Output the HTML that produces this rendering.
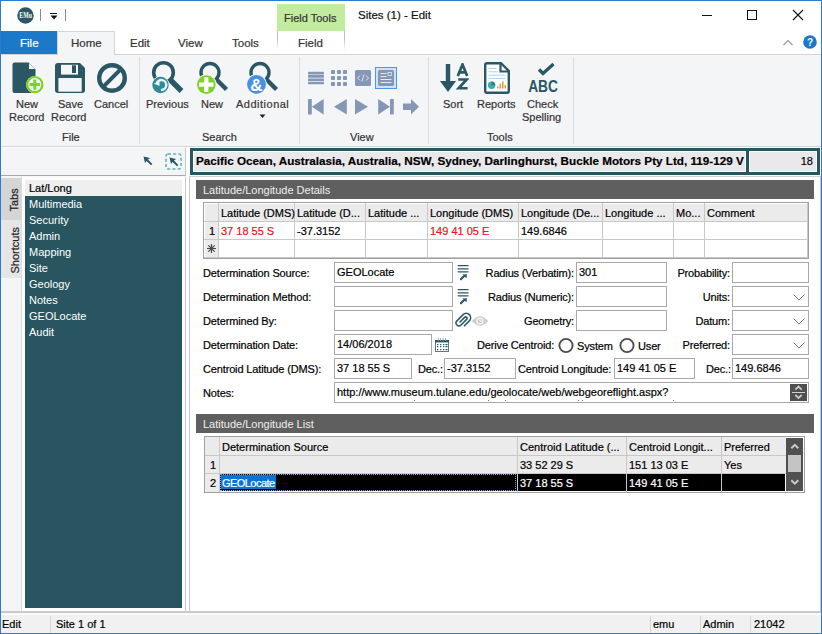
<!DOCTYPE html>
<html><head><meta charset="utf-8">
<style>
*{box-sizing:border-box;margin:0;padding:0}
html,body{width:822px;height:634px;overflow:hidden;background:#fff}
body{font-family:"Liberation Sans",sans-serif;font-size:11px;color:#222;position:relative}
.a{position:absolute}
.t{position:absolute;white-space:nowrap;line-height:13px;-webkit-text-stroke:0.2px currentColor}
.rb{color:#333}
.inp{position:absolute;border:1px solid #a9a9a9;background:#fff;height:21px}
.inp span{-webkit-text-stroke:0.2px #000;color:#000;position:absolute;left:2px;top:3px;white-space:nowrap}
.lbl{position:absolute;white-space:nowrap;color:#000;letter-spacing:-0.15px}
.hdr{-webkit-text-stroke:0;position:absolute;background:#5e5f5e;color:#f0f0f0;height:19px;padding-left:7px;line-height:21px}
.sel{position:absolute;border:1px solid #a9a9a9;background:#fff;height:21px}
.sel svg{position:absolute;right:3px;top:7px}
.vsep{position:absolute;width:1px;background:#dcdcdc}
</style></head>
<body>
<!-- window border -->
<div class="a" style="left:0;top:0;width:822px;height:634px;border:1px solid #2b7bd4;z-index:50;pointer-events:none"></div>

<!-- title bar -->
<svg class="a" style="left:17px;top:7px" width="17" height="17" viewBox="0 0 17 17"><circle cx="8.5" cy="8.5" r="8.2" fill="#2a5763"/><text x="2.3" y="11.3" font-family="Liberation Serif" font-size="7.5" font-weight="bold" fill="#fff" textLength="12.6" lengthAdjust="spacingAndGlyphs">EMu</text></svg>
<div class="a" style="left:40px;top:9px;width:1px;height:12px;background:#8a8a8a"></div>
<div class="a" style="left:50px;top:13px;width:7px;height:1px;background:#111"></div>
<svg class="a" style="left:50px;top:15px" width="8" height="5"><path d="M0.5 0.5H7.5L4 4.5Z" fill="#111"/></svg>
<div class="a" style="left:65px;top:9px;width:1px;height:12px;background:#8a8a8a"></div>

<div class="a" style="left:277px;top:4px;width:68px;height:27px;background:#c1eb9e"></div>
<div class="t" style="left:284px;top:12px;color:#333">Field Tools</div>
<div class="t" style="left:358px;top:9px;color:#111;font-size:11.5px">Sites (1) - Edit</div>

<div class="a" style="left:702px;top:15px;width:10px;height:1px;background:#111"></div>
<div class="a" style="left:747px;top:10px;width:10px;height:10px;border:1px solid #111"></div>
<svg class="a" style="left:792px;top:9px" width="12" height="12"><path d="M1 1L11 11M11 1L1 11" stroke="#111" stroke-width="1.1"/></svg>

<!-- tab row -->
<div class="a" style="left:1px;top:31px;width:56px;height:23px;background:#1c79c9"></div>
<div class="t" style="left:20px;top:37px;color:#fff;font-size:11.5px">File</div>
<div class="a" style="left:57px;top:31px;width:58px;height:24px;background:#f4f5f7;border:1px solid #d4d4d4;border-bottom:none;z-index:2"></div>
<div class="t rb" style="left:71px;top:37px;z-index:3;font-size:11.5px">Home</div>
<div class="t rb" style="left:130px;top:37px;font-size:11.5px">Edit</div>
<div class="t rb" style="left:178px;top:37px;font-size:11.5px">View</div>
<div class="t rb" style="left:232px;top:37px;font-size:11.5px">Tools</div>
<div class="a" style="left:277px;top:31px;width:1px;height:19px;background:linear-gradient(#bdbdbd,#bdbdbd 40%,rgba(255,255,255,0))"></div><div class="a" style="left:344px;top:31px;width:1px;height:19px;background:linear-gradient(#bdbdbd,#bdbdbd 40%,rgba(255,255,255,0))"></div>
<div class="t rb" style="left:298px;top:37px;font-size:11.5px">Field</div>
<svg class="a" style="left:783px;top:39px" width="10" height="7"><path d="M0.5 6L5 1.5L9.5 6" stroke="#999" fill="none" stroke-width="1.2"/></svg>
<svg class="a" style="left:803px;top:35px" width="14" height="14"><circle cx="7" cy="7" r="6.8" fill="#1c79c9"/><text x="7" y="11" font-size="10" font-weight="bold" fill="#fff" text-anchor="middle">?</text></svg>

<!-- ribbon -->
<div class="a" style="left:1px;top:54px;width:820px;height:93px;background:#f4f5f7;border-top:1px solid #d4d4d4;border-bottom:1px solid #d4d4d4"></div>

<!-- File group -->
<svg class="a" style="left:12px;top:62px" width="34" height="33" viewBox="0 0 34 33">
 <path d="M2.5 0.5H16.5L23.5 7.5V30.5Q23.5 31 23 31H2.5Q0.5 31 0.5 29V2.5Q0.5 0.5 2.5 0.5Z" fill="#2a5763"/>
 <path d="M17 1.2V7H22.8Z" fill="#f4f5f7"/>
 <circle cx="22.8" cy="22.6" r="8.7" fill="#f4f5f7"/>
 <circle cx="22.8" cy="22.6" r="7.6" fill="none" stroke="#7ed321" stroke-width="2.2"/>
 <path d="M22.8 17.4V27.8M17.6 22.6H28" stroke="#7ed321" stroke-width="3"/>
</svg>
<div class="t rb" style="left:16px;top:98px">New</div>
<div class="t rb" style="left:9px;top:111px">Record</div>

<svg class="a" style="left:55px;top:63px" width="30" height="30" viewBox="0 0 30 30">
 <path d="M3 0H25L30 5V27Q30 30 27 30H3Q0 30 0 27V3Q0 0 3 0Z" fill="#2a5763"/>
 <rect x="6" y="1.8" width="17" height="9.8" fill="#f4f5f7"/>
 <rect x="17" y="2.3" width="4" height="7.7" fill="#2a5763"/>
 <rect x="3.4" y="15" width="23.3" height="13.7" fill="#f4f5f7"/>
</svg>
<div class="t rb" style="left:58px;top:98px">Save</div>
<div class="t rb" style="left:51px;top:111px">Record</div>

<svg class="a" style="left:97px;top:63px" width="30" height="30" viewBox="0 0 30 30">
 <circle cx="15" cy="15" r="12.8" fill="none" stroke="#2a5763" stroke-width="4.4"/>
 <path d="M23.8 6.2L6.2 23.8" stroke="#2a5763" stroke-width="4"/>
</svg>
<div class="t rb" style="left:94px;top:98px">Cancel</div>
<div class="t rb" style="left:62px;top:131px">File</div>
<div class="vsep" style="left:139px;top:57px;height:87px"></div>

<!-- Search group -->
<svg class="a" style="left:150px;top:60px" width="36" height="36" viewBox="0 0 36 36">
 <circle cx="13.5" cy="12.5" r="9.8" fill="none" stroke="#2a5763" stroke-width="3.6"/>
 <path d="M20.5 20L31.5 31" stroke="#2a5763" stroke-width="5.4"/>
 <circle cx="10.5" cy="25" r="9" fill="#f4f5f7"/>
 <circle cx="10.5" cy="25" r="8.2" fill="#2e8a98"/>
 <path d="M6.5 23.5 A5 5 0 1 1 11 30" fill="none" stroke="#e8f3f5" stroke-width="2.4"/>
 <path d="M4 23.8L9.5 20.5L9.5 26Z" fill="#e8f3f5"/>
</svg>
<div class="t rb" style="left:146px;top:98px">Previous</div>

<svg class="a" style="left:196px;top:60px" width="34" height="36" viewBox="0 0 34 36">
 <circle cx="14" cy="12.5" r="9" fill="none" stroke="#2a5763" stroke-width="3.4"/>
 <path d="M20.5 19.5L30.5 29.5" stroke="#2a5763" stroke-width="4.4"/>
 <circle cx="10.3" cy="24.6" r="10.3" fill="#f4f5f7"/>
 <circle cx="10.3" cy="24.6" r="9.3" fill="#7ed321"/>
 <path d="M10.3 17.3V31.9M3 24.6H17.6" stroke="#fff" stroke-width="4.2"/>
</svg>
<div class="t rb" style="left:201px;top:98px">New</div>

<svg class="a" style="left:246px;top:60px" width="34" height="36" viewBox="0 0 34 36">
 <circle cx="14" cy="12.5" r="9" fill="none" stroke="#2a5763" stroke-width="3.4"/>
 <path d="M20.5 19.5L30.5 29.5" stroke="#2a5763" stroke-width="4.4"/>
 <circle cx="10.5" cy="24.3" r="10.4" fill="#f4f5f7"/>
 <circle cx="10.5" cy="24.3" r="9.4" fill="#4a90e2"/>
 <text x="10.3" y="30.5" font-family="Liberation Sans" font-size="17" font-weight="bold" fill="#fff" text-anchor="middle">&amp;</text>
</svg>
<div class="t rb" style="left:236px;top:98px;letter-spacing:0.5px">Additional</div>
<svg class="a" style="left:259px;top:114px" width="7" height="5"><path d="M0.5 0.5H6.5L3.5 4Z" fill="#222"/></svg>
<div class="t rb" style="left:202px;top:131px">Search</div>
<div class="vsep" style="left:299px;top:57px;height:87px"></div>

<!-- View group -->
<svg class="a" style="left:308px;top:71px" width="16" height="14" viewBox="0 0 16 14">
 <rect x="0" y="0.8" width="16" height="2.6" rx="0.6" fill="#8497b5"/><rect x="0" y="4.1" width="16" height="2.6" rx="0.6" fill="#8497b5"/>
 <rect x="0" y="7.4" width="16" height="2.6" rx="0.6" fill="#8497b5"/><rect x="0" y="10.7" width="16" height="2.6" rx="0.6" fill="#8497b5"/>
</svg>
<svg class="a" style="left:331px;top:70px" width="16" height="16" viewBox="0 0 16 16" fill="#8497b5">
 <rect x="0" y="0" width="4" height="4" rx="0.8"/><rect x="6" y="0" width="4" height="4" rx="0.8"/><rect x="12" y="0" width="4" height="4" rx="0.8"/>
 <rect x="0" y="6" width="4" height="4" rx="0.8"/><rect x="6" y="6" width="4" height="4" rx="0.8"/><rect x="12" y="6" width="4" height="4" rx="0.8"/>
 <rect x="0" y="12" width="4" height="4" rx="0.8"/><rect x="6" y="12" width="4" height="4" rx="0.8"/><rect x="12" y="12" width="4" height="4" rx="0.8"/>
</svg>
<svg class="a" style="left:355px;top:70px" width="16" height="16" viewBox="0 0 16 16">
 <rect x="0" y="0" width="16" height="16" rx="1.5" fill="#8497b5"/>
 <path d="M5 5.5L2.5 8L5 10.5M11 5.5L13.5 8L11 10.5M9 4.5L7 11.5" stroke="#e6eaf1" stroke-width="0.9" fill="none"/>
</svg>
<div class="a" style="left:375px;top:67px;width:22px;height:22px;background:#cde3f7;border:1px solid #4b98e3"></div>
<svg class="a" style="left:378px;top:70px" width="16" height="16" viewBox="0 0 16 16">
 <rect x="0" y="0" width="16" height="16" rx="1.5" fill="#8497b5"/>
 <rect x="2.5" y="3" width="6" height="1" fill="#e6eaf1"/><rect x="10" y="2.5" width="3.5" height="3" fill="none" stroke="#e6eaf1" stroke-width="0.8"/>
 <rect x="2.5" y="6" width="6" height="1" fill="#e6eaf1"/><rect x="2.5" y="9" width="11" height="1" fill="#e6eaf1"/><rect x="2.5" y="12" width="11" height="1" fill="#e6eaf1"/>
</svg>
<svg class="a" style="left:308px;top:99px" width="112" height="16" viewBox="0 0 112 16" fill="#8497b5">
 <rect x="0" y="0" width="3.8" height="15.5" rx="0.5"/><path d="M3.8 7.7L15.6 0V15.5Z"/>
 <path d="M26 7.7L38.8 0V15.5Z"/>
 <path d="M47 0L60 7.7L47 15.5Z"/>
 <path d="M70.2 0L82 7.7L70.2 15.5Z"/><rect x="82" y="0" width="3.8" height="15.5" rx="0.5"/>
 <path d="M95 4.5H103V0L111 7.7L103 15.5V11H95Z"/>
</svg>
<div class="t rb" style="left:350px;top:131px">View</div>
<div class="vsep" style="left:428px;top:57px;height:87px"></div>

<!-- Tools group -->
<svg class="a" style="left:440px;top:63px" width="29" height="30" viewBox="0 0 29 30">
 <rect x="5.8" y="1" width="4.4" height="19" fill="#2a5763"/>
 <path d="M0 18H16L8 29Z" fill="#2a5763"/>
 <path d="M17.8 13L22.5 1.5L27.2 13M19.4 9.4H25.6" stroke="#2a5763" stroke-width="2.7" fill="none" stroke-linejoin="miter"/>
 <path d="M18.3 16.5H26.7L18.6 25.3H27.6" stroke="#2a5763" stroke-width="2.6" fill="none" stroke-linejoin="miter"/>
</svg>
<div class="t rb" style="left:443px;top:98px">Sort</div>

<svg class="a" style="left:484px;top:62px" width="26" height="32" viewBox="0 0 26 32">
 <path d="M3 1.2H17L24.8 9V29Q24.8 30.8 23 30.8H3Q1.2 30.8 1.2 29V3Q1.2 1.2 3 1.2Z" fill="#fff" stroke="#2a5763" stroke-width="2.4"/>
 <path d="M16.5 1.5V9.5H24.5" fill="none" stroke="#2a5763" stroke-width="2.2"/>
 <path d="M4.5 6.5H12.5M4.5 9.8H13.5M4.5 13.2H21.5M4.5 16.5H21.5" stroke="#b3d4f0" stroke-width="1.1"/>
 <circle cx="7.6" cy="23.2" r="3.7" fill="#3aafa9"/><path d="M7.6 23.2V19.5A3.7 3.7 0 0 1 11.3 23.2Z" fill="#2a5763" opacity="0.55"/>
 <path d="M13.8 26.5V24.5M16.3 26.5V21.8M18.8 26.5V19.5M21.3 26.5V23" stroke="#e39b2e" stroke-width="1.5"/>
</svg>
<div class="t rb" style="left:477px;top:98px">Reports</div>

<svg class="a" style="left:526px;top:62px" width="34" height="31" viewBox="0 0 34 31">
 <path d="M13 7.5L17 11.5L27.5 2" fill="none" stroke="#2a5763" stroke-width="3.3"/>
 <text x="2.2" y="29.8" font-family="Liberation Sans" font-size="15.6" font-weight="bold" fill="#2a5763" textLength="29.8" lengthAdjust="spacingAndGlyphs">ABC</text>
</svg>
<div class="t rb" style="left:527px;top:98px">Check</div>
<div class="t rb" style="left:522px;top:111px">Spelling</div>
<div class="t rb" style="left:487px;top:131px">Tools</div>
<div class="vsep" style="left:573px;top:57px;height:87px"></div>


<!-- lower panels -->
<div class="a" style="left:1px;top:147px;width:820px;height:466px;background:#f4f5f7"></div>
<!-- left toolbar -->
<div class="a" style="left:1px;top:147px;width:185px;height:29px;border-right:1px solid #c8c8c8;border-bottom:1px solid #a9a9a9;border-top:1px solid #fff"></div>
<svg class="a" style="left:143px;top:156px" width="10" height="10" viewBox="0 0 10 10"><path d="M0.5 0.5L7 2L5 3.6L9.3 8L8 9.3L3.6 5L2 7Z" fill="#2a5763"/></svg>
<svg class="a" style="left:165px;top:153px" width="17" height="17" viewBox="0 0 17 17">
 <rect x="1" y="1" width="15" height="15" rx="2" fill="none" stroke="#5fb2b8" stroke-width="1.6" stroke-dasharray="3 2.2"/>
 <path d="M4.5 4.5L11 6L9 7.6L13.3 12L12 13.3L7.6 9L6 11Z" fill="#2a5763"/>
</svg>
<!-- sidebar tabs -->
<div class="a" style="left:1px;top:178px;width:20px;height:42px;background:#d5d5d5"></div>
<div class="a" style="left:1px;top:220px;width:20px;height:58px;background:#e6e6e6"></div>
<div class="a" style="left:21px;top:177px;width:1px;height:435px;background:#dcdcdc"></div>
<div class="t" style="left:3px;top:194px;width:22px;transform:rotate(-90deg);transform-origin:50% 50%;text-align:center;color:#222">Tabs</div>
<div class="t" style="left:-8px;top:244px;width:46px;transform:rotate(-90deg);transform-origin:50% 50%;text-align:center;color:#222">Shortcuts</div>
<!-- list -->
<div class="a" style="left:22px;top:177px;width:164px;height:435px;background:#fff;border-right:1px solid #c8c8c8"></div>
<div class="a" style="left:25px;top:180px;width:157px;height:16px;background:#efefef"></div>
<div class="a" style="left:25px;top:196px;width:157px;height:412px;background:#285560"></div>
<div class="t" style="left:29px;top:182px;color:#000">Lat/Long</div>
<div class="t" style="left:29px;top:196px;color:#fff;line-height:16px;-webkit-text-stroke:0">Multimedia<br>Security<br>Admin<br>Mapping<br>Site<br>Geology<br>Notes<br>GEOLocate<br>Audit</div>

<div class="a" style="left:186px;top:147px;width:3px;height:465px;background:#fff"></div>
<!-- right panel -->
<div class="a" style="left:189px;top:147px;width:632px;height:29px;background:#fff"></div><div class="a" style="left:189px;top:176px;width:632px;height:436px;background:#fff;border-left:1px solid #c8c8c8;border-right:1px solid #c8c8c8;border-top:1px solid #d0d0d0"></div>

<div class="a" style="left:190px;top:148px;width:630px;height:27px;background:#285560"></div>
<div class="a" style="left:193px;top:151px;width:553px;height:21px;background:#e9e9ec;border:1px solid #fff;overflow:hidden">
 <div class="t" style="left:2px;top:2px;font-weight:bold;color:#000;font-size:11.7px">Pacific Ocean, Australasia, Australia, NSW, Sydney, Darlinghurst, Buckle Motors Pty Ltd, 119-129 V</div>
</div>
<div class="a" style="left:749px;top:151px;width:68px;height:21px;background:#e9e9ec;border:1px solid #fff">
 <div class="t" style="right:3px;top:3px;color:#000">18</div>
</div>

<!-- details header -->
<div class="hdr" style="left:196px;top:180px;width:618px">Latitude/Longitude Details</div>
<div class="a" style="left:203px;top:202px;width:606px;height:57px;border:1px solid #a0a0a0;background:#fff"></div>
<div class="a" style="left:205px;top:204px;width:602px;height:17px;background:#ebebec"></div>
<div class="a" style="left:205px;top:204px;width:13px;height:53px;background:#ebebec"></div>
<div class="a" style="left:204px;top:221px;width:604px;height:1px;background:#c8c8c8"></div>
<div class="a" style="left:204px;top:239px;width:604px;height:1px;background:#c8c8c8"></div>
<div class="a" style="left:204px;top:257px;width:604px;height:1px;background:#c8c8c8"></div>
<div class="a" style="left:218px;top:203px;width:1px;height:55px;background:#c8c8c8"></div>
<div class="a" style="left:294px;top:203px;width:1px;height:55px;background:#c8c8c8"></div>
<div class="a" style="left:365px;top:203px;width:1px;height:55px;background:#c8c8c8"></div>
<div class="a" style="left:427px;top:203px;width:1px;height:55px;background:#c8c8c8"></div>
<div class="a" style="left:518px;top:203px;width:1px;height:55px;background:#c8c8c8"></div>
<div class="a" style="left:602px;top:203px;width:1px;height:55px;background:#c8c8c8"></div>
<div class="a" style="left:673px;top:203px;width:1px;height:55px;background:#c8c8c8"></div>
<div class="a" style="left:704px;top:203px;width:1px;height:55px;background:#c8c8c8"></div>
<div class="a" style="left:807px;top:203px;width:1px;height:55px;background:#c8c8c8"></div>
<div class="t" style="left:221px;top:207px;color:#000">Latitude (DMS)</div>
<div class="t" style="left:297px;top:207px;color:#000">Latitude (D...</div>
<div class="t" style="left:368px;top:207px;color:#000">Latitude ...</div>
<div class="t" style="left:430px;top:207px;color:#000">Longitude (DMS)</div>
<div class="t" style="left:521px;top:207px;color:#000">Longitude (De...</div>
<div class="t" style="left:605px;top:207px;color:#000">Longitude ...</div>
<div class="t" style="left:676px;top:207px;color:#000">Mo...</div>
<div class="t" style="left:707px;top:207px;color:#000">Comment</div>
<div class="t" style="left:209px;top:225px;color:#000">1</div>
<svg class="a" style="left:207px;top:244px" width="9" height="9" viewBox="0 0 9 9"><path d="M4.5 0V9M0 4.5H9M1.3 1.3L7.7 7.7M7.7 1.3L1.3 7.7" stroke="#4a4a4a" stroke-width="1.2"/></svg>
<div class="t" style="left:221px;top:225px;color:#e8141b">37 18 55 S</div>
<div class="t" style="left:297px;top:225px;color:#000">-37.3152</div>
<div class="t" style="left:430px;top:225px;color:#e8141b">149 41 05 E</div>
<div class="t" style="left:521px;top:225px;color:#000">149.6846</div>
<div class="lbl t" style="left:203px;top:267px">Determination Source:</div>
<div class="lbl t" style="left:203px;top:291px">Determination Method:</div>
<div class="lbl t" style="left:203px;top:315px">Determined By:</div>
<div class="lbl t" style="left:203px;top:339px">Determination Date:</div>
<div class="lbl t" style="left:203px;top:363px">Centroid Latitude (DMS):</div>
<div class="lbl t" style="left:203px;top:387px">Notes:</div>
<div class="inp" style="left:334px;top:262px;width:119px;height:21px"><span>GEOLocate</span></div>
<div class="inp" style="left:334px;top:286px;width:119px;height:21px"><span></span></div>
<div class="inp" style="left:334px;top:310px;width:119px;height:21px"><span></span></div>
<div class="inp" style="left:334px;top:334px;width:98px;height:21px"><span>14/06/2018</span></div>
<div class="inp" style="left:334px;top:358px;width:78px;height:21px"><span>37 18 55 S</span></div>
<div class="inp" style="left:334px;top:382px;width:475px;height:21px"><span>http://www.museum.tulane.edu/geolocate/web/webgeoreflight.aspx?</span></div>
<div class="lbl t" style="left:374px;width:200px;text-align:right;top:267px">Radius (Verbatim):</div>
<div class="lbl t" style="left:374px;width:200px;text-align:right;top:291px">Radius (Numeric):</div>
<div class="lbl t" style="left:374px;width:200px;text-align:right;top:315px">Geometry:</div>
<div class="inp" style="left:576px;top:262px;width:91px;height:21px"><span>301</span></div>
<div class="inp" style="left:576px;top:286px;width:91px;height:21px"><span></span></div>
<div class="inp" style="left:576px;top:310px;width:91px;height:21px"><span></span></div>
<div class="lbl t" style="left:530px;width:200px;text-align:right;top:267px">Probability:</div>
<div class="lbl t" style="left:530px;width:200px;text-align:right;top:291px">Units:</div>
<div class="lbl t" style="left:530px;width:200px;text-align:right;top:315px">Datum:</div>
<div class="lbl t" style="left:530px;width:200px;text-align:right;top:339px">Preferred:</div>
<div class="inp" style="left:732px;top:262px;width:77px;height:21px"><span></span></div>
<div class="sel" style="left:732px;top:286px;width:77px"><svg width="12" height="7"><path d="M0.5 0.5L6 6L11.5 0.5" stroke="#777" fill="none" stroke-width="1"/></svg></div>
<div class="sel" style="left:732px;top:310px;width:77px"><svg width="12" height="7"><path d="M0.5 0.5L6 6L11.5 0.5" stroke="#777" fill="none" stroke-width="1"/></svg></div>
<div class="sel" style="left:732px;top:334px;width:77px"><svg width="12" height="7"><path d="M0.5 0.5L6 6L11.5 0.5" stroke="#777" fill="none" stroke-width="1"/></svg></div>
<div class="lbl t" style="left:477px;top:339px">Derive Centroid:</div>
<svg class="a" style="left:558px;top:337px" width="17" height="17"><circle cx="8" cy="8.5" r="6.6" fill="#fff" stroke="#4d4d4d" stroke-width="1.9"/></svg>
<div class="lbl t" style="left:577px;top:340px">System</div>
<svg class="a" style="left:619px;top:337px" width="17" height="17"><circle cx="8" cy="8.5" r="6.6" fill="#fff" stroke="#4d4d4d" stroke-width="1.9"/></svg>
<div class="lbl t" style="left:638px;top:340px">User</div>
<div class="lbl t" style="left:418px;top:363px">Dec.:</div>
<div class="inp" style="left:444px;top:358px;width:72px;height:21px"><span>-37.3152</span></div>
<div class="lbl t" style="left:518px;top:363px">Centroid Longitude:</div>
<div class="inp" style="left:614px;top:358px;width:81px;height:21px"><span>149 41 05 E</span></div>
<div class="lbl t" style="left:706px;top:363px">Dec.:</div>
<div class="inp" style="left:732px;top:358px;width:77px;height:21px"><span>149.6846</span></div>
<svg class="a" style="left:457px;top:264px" width="13" height="17" viewBox="0 0 13 17"><path d="M0.7 1.7H11.5M0.7 4.9H11.5M0.7 7.9H11.5" stroke="#2a5763" stroke-width="1.3"/><path d="M3.9 15.2L6.8 12.3" stroke="#2a5763" stroke-width="2.2" stroke-linecap="round"/><path d="M9.9 10.2L5.4 10.6L9.5 14.6Z" fill="#2a5763"/></svg>
<svg class="a" style="left:457px;top:288px" width="13" height="17" viewBox="0 0 13 17"><path d="M0.7 1.7H11.5M0.7 4.9H11.5M0.7 7.9H11.5" stroke="#2a5763" stroke-width="1.3"/><path d="M3.9 15.2L6.8 12.3" stroke="#2a5763" stroke-width="2.2" stroke-linecap="round"/><path d="M9.9 10.2L5.4 10.6L9.5 14.6Z" fill="#2a5763"/></svg>
<svg class="a" style="left:454px;top:312px" width="18" height="18" viewBox="0 0 18 18"><g transform="rotate(45 9 9)"><path d="M7.6 12.5V5.3A1.4 1.4 0 0 1 10.4 5.3V13.2A2.9 2.9 0 0 1 4.6 13.2V4.4A4.4 4.4 0 0 1 13.4 4.4V12" fill="none" stroke="#2a5763" stroke-width="1.5"/></g></svg>
<svg class="a" style="left:471px;top:315px" width="18" height="12" viewBox="0 0 18 12"><path d="M0.8 6Q9 -3.5 17.2 6Q9 15.5 0.8 6Z" fill="#cdcdcd"/><circle cx="9" cy="6" r="3.6" fill="#fff"/><circle cx="9" cy="6" r="2.5" fill="#cdcdcd"/><path d="M9 4V6.2H11" stroke="#fff" stroke-width="0.8" fill="none"/></svg>
<svg class="a" style="left:435px;top:338px" width="14" height="14" viewBox="0 0 14 14"><rect x="0.5" y="2.5" width="13" height="11" fill="#fff" stroke="#5a7d85" stroke-width="1"/><rect x="0" y="2" width="14" height="2.4" fill="#2a5763"/><path d="M3.3 0V3M5.4 0V3M8 0V3M10.5 0V3" stroke="#8fa9ae" stroke-width="0.9"/><g fill="#2a5763"><rect x="2" y="6" width="1.3" height="1.2"/><rect x="5" y="6" width="1.3" height="1.2"/><rect x="8" y="6" width="1.3" height="1.2"/><rect x="10.5" y="6" width="2" height="1.2"/><rect x="2" y="8" width="1.3" height="1.2"/><rect x="5" y="8" width="1.3" height="1.2"/><rect x="8" y="8" width="1.3" height="1.2"/><rect x="10.5" y="8" width="2" height="1.2"/><rect x="2" y="11" width="1.3" height="1.2"/><rect x="5" y="11" width="1.3" height="1.2"/><rect x="8" y="11" width="1.3" height="1.2"/><rect x="10.5" y="11" width="2" height="1.2"/></g></svg>
<div class="a" style="left:790px;top:384px;width:17px;height:17px;background:#4f4f4f"><svg width="17" height="17"><path d="M5.3 5.6L8.5 2.6L11.7 5.6M5.3 11L8.5 14L11.7 11" stroke="#c9c9c9" fill="none" stroke-width="1.8"/><path d="M2 8.5H15" stroke="#cfcfcf" stroke-width="1"/></svg></div>
<div class="a" style="left:414px;top:400px;width:1px;height:1px;background:#777"></div><div class="a" style="left:488px;top:400px;width:1px;height:1px;background:#777"></div><div class="a" style="left:505px;top:400px;width:1px;height:1px;background:#777"></div><div class="a" style="left:578px;top:400px;width:1px;height:1px;background:#777"></div><div class="a" style="left:582px;top:400px;width:1px;height:1px;background:#777"></div><div class="a" style="left:673px;top:400px;width:1px;height:1px;background:#777"></div>
<div class="hdr" style="left:196px;top:414px;width:618px">Latitude/Longitude List</div>
<div class="a" style="left:204px;top:436px;width:601px;height:57px;border:1px solid #a0a0a0;background:#fff"></div>
<div class="a" style="left:205px;top:437px;width:581px;height:36px;background:#ebebeb"></div>
<div class="a" style="left:205px;top:437px;width:14px;height:55px;background:#ebebeb"></div>
<div class="a" style="left:219px;top:474px;width:566px;height:17px;background:#000"></div>
<div class="a" style="left:205px;top:455px;width:581px;height:1px;background:#c8c8c8"></div>
<div class="a" style="left:205px;top:473px;width:581px;height:1px;background:#c8c8c8"></div>
<div class="a" style="left:219px;top:437px;width:1px;height:55px;background:#c8c8c8"></div>
<div class="a" style="left:517px;top:437px;width:1px;height:55px;background:#c8c8c8"></div>
<div class="a" style="left:626px;top:437px;width:1px;height:55px;background:#c8c8c8"></div>
<div class="a" style="left:721px;top:437px;width:1px;height:55px;background:#c8c8c8"></div>
<div class="t" style="left:222px;top:441px;color:#000">Determination Source</div>
<div class="t" style="left:520px;top:441px;color:#000">Centroid Latitude (...</div>
<div class="t" style="left:629px;top:441px;color:#000">Centroid Longit...</div>
<div class="t" style="left:724px;top:441px;color:#000">Preferred</div>
<div class="t" style="left:210px;top:459px;color:#000">1</div>
<div class="t" style="left:210px;top:477px;color:#000">2</div>
<div class="t" style="left:520px;top:459px;color:#000">33 52 29 S</div>
<div class="t" style="left:629px;top:459px;color:#000">151 13 03 E</div>
<div class="t" style="left:724px;top:459px;color:#000">Yes</div>
<div class="a" style="left:220px;top:474px;width:296px;height:17px;border:1px dotted #7aa7d8"></div>
<div class="a" style="left:221px;top:475px;width:55px;height:14px;background:#0a74d6"></div>
<div class="t" style="left:222px;top:477px;color:#fff;letter-spacing:-0.55px">GEOLocate</div>
<div class="t" style="left:520px;top:477px;color:#fff">37 18 55 S</div>
<div class="t" style="left:629px;top:477px;color:#fff">149 41 05 E</div>
<div class="a" style="left:786px;top:438px;width:17px;height:53px;background:#505050"></div>
<div class="a" style="left:788px;top:455px;width:13px;height:17px;background:#c3c3c3"></div>
<svg class="a" style="left:789px;top:442px" width="12" height="8"><path d="M2.3 6.3L5.8 2.8L9.3 6.3" stroke="#c9c9c9" fill="none" stroke-width="2"/></svg>
<svg class="a" style="left:789px;top:478px" width="12" height="8"><path d="M2.3 2.2L5.8 5.7L9.3 2.2" stroke="#c9c9c9" fill="none" stroke-width="2"/></svg>

<!-- status bar -->
<div class="a" style="left:1px;top:611px;width:820px;height:2px;background:#c9c9c9"></div>
<div class="a" style="left:1px;top:613px;width:820px;height:2px;background:#fafafa"></div>
<div class="a" style="left:1px;top:615px;width:820px;height:18px;background:#f1f1f1"></div>
<div class="t" style="left:2px;top:618px;color:#000">Edit</div>
<div class="a" style="left:50px;top:616px;width:1px;height:17px;background:#d6d6d6"></div>
<div class="t" style="left:56px;top:618px;color:#000">Site 1 of 1</div>
<div class="a" style="left:650px;top:616px;width:1px;height:17px;background:#d6d6d6"></div>
<div class="t" style="left:653px;top:618px;color:#000">emu</div>
<div class="a" style="left:700px;top:616px;width:1px;height:17px;background:#d6d6d6"></div>
<div class="t" style="left:703px;top:618px;color:#000">Admin</div>
<div class="a" style="left:750px;top:616px;width:1px;height:17px;background:#d6d6d6"></div>
<div class="t" style="left:754px;top:618px;color:#000">21042</div>

</body></html>
